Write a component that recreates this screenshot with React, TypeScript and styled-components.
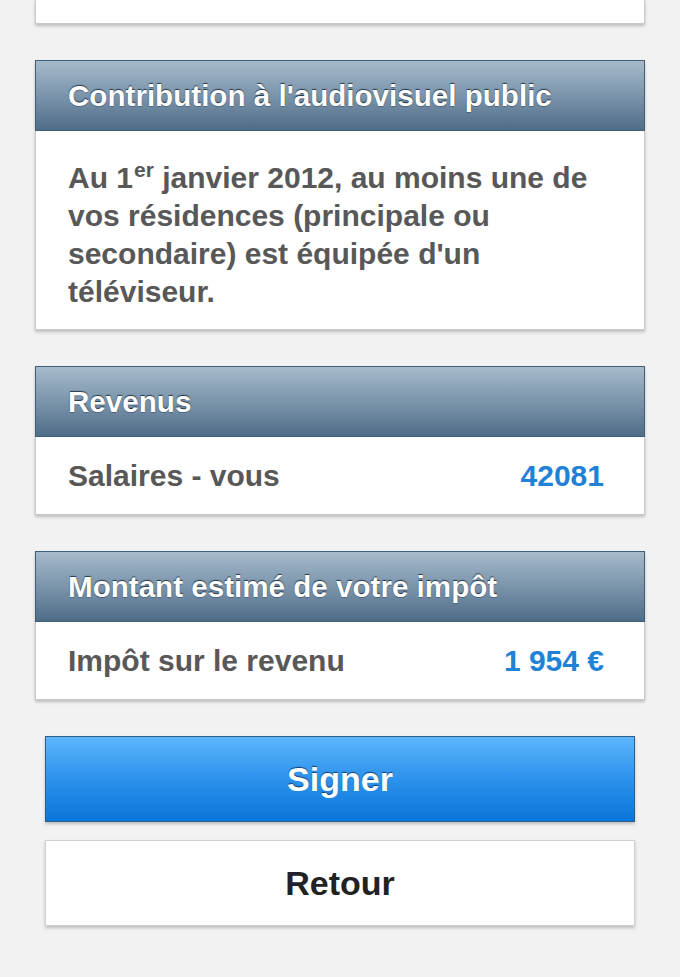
import React from "react";
import styled, { createGlobalStyle } from "styled-components";

const GlobalStyle = createGlobalStyle`
  html, body {
    margin: 0;
    padding: 0;
    background: #f2f2f2;
  }
  body {
    font-family: "Liberation Sans", Arial, sans-serif;
  }
`;

const Page = styled.div`
  display: flex;
  flex-direction: column;
  padding: 0 35px 52px;
  min-height: 977px;
  box-sizing: border-box;
`;

const Card = styled.section`
  background: #fff;
  border: 1px solid #c9c9c9;
  box-shadow: 0 2px 3px rgba(0, 0, 0, 0.22);
  margin-top: 36px;
  display: flex;
  flex-direction: column;
`;

const TopStub = styled.div`
  background: #fff;
  height: 23px;
  border: 1px solid #c9c9c9;
  border-top: none;
  box-shadow: 0 2px 3px rgba(0, 0, 0, 0.22);
`;

const CardHeader = styled.h2`
  margin: -1px -1px 0;
  height: 69px;
  display: flex;
  align-items: center;
  padding: 0 32px;
  background: linear-gradient(#a6bacb, #7f98ae 45%, #4f6d88);
  border: 1px solid #3f607d;
  color: #fff;
  font-size: 29.6px;
  font-weight: bold;
  text-shadow: 0 -1px 1px rgba(20, 35, 50, 0.85), 0 1px 0 rgba(30, 50, 70, 0.4);
`;

const CardText = styled.p`
  margin: 0;
  padding: 28px 32px 18px;
  font-size: 30px;
  line-height: 38px;
  font-weight: bold;
  color: #585858;
`;

const Sup = styled.sup`
  margin-left: 1px;
  font-size: 21px;
  line-height: 0;
  vertical-align: 11px;
`;

const Row = styled.div`
  height: 77px;
  display: flex;
  align-items: center;
  justify-content: space-between;
  padding: 0 40px 0 32px;
  font-size: 30px;
  font-weight: bold;
`;

const Label = styled.span`
  color: #585858;
`;

const Value = styled.span`
  color: #1f82d6;
`;

const Button = styled.button<{ $primary?: boolean }>`
  margin: ${({ $primary }) => ($primary ? "36px" : "18px")} 10px 0;
  height: 86px;
  font-family: "Liberation Sans", Arial, sans-serif;
  font-size: 34px;
  font-weight: bold;
  cursor: pointer;
  color: ${({ $primary }) => ($primary ? "#fff" : "#222")};
  background: ${({ $primary }) =>
    $primary ? "linear-gradient(#5cb6fb, #2c92ec 50%, #0a76d9)" : "#fff"};
  border: 1px solid ${({ $primary }) => ($primary ? "#2d5f8c" : "#d0d0d0")};
  box-shadow: 0 2px 3px rgba(0, 0, 0, 0.22);
  text-shadow: ${({ $primary }) =>
    $primary ? "0 -1px 1px rgba(10, 40, 80, 0.8)" : "none"};
`;

export default function App() {
  return (
    <>
      <GlobalStyle />
      <Page>
        <TopStub />
        <Card>
          <CardHeader>Contribution à l'audiovisuel public</CardHeader>
          <CardText>
            Au 1<Sup>er</Sup> janvier 2012, au moins une de vos résidences
            (principale ou secondaire) est équipée d'un téléviseur.
          </CardText>
        </Card>
        <Card>
          <CardHeader>Revenus</CardHeader>
          <Row>
            <Label>Salaires - vous</Label>
            <Value>42081</Value>
          </Row>
        </Card>
        <Card>
          <CardHeader>Montant estimé de votre impôt</CardHeader>
          <Row>
            <Label>Impôt sur le revenu</Label>
            <Value>1 954 €</Value>
          </Row>
        </Card>
        <Button $primary>Signer</Button>
        <Button>Retour</Button>
      </Page>
    </>
  );
}
